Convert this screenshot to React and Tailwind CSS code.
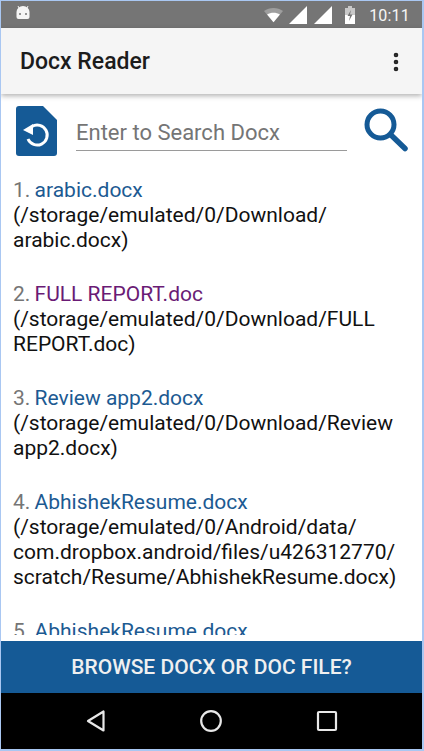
import { MoreVertical } from 'lucide-react';

const files = [
    { n: 1, name: 'arabic.docx', path: ['(/storage/emulated/0/Download/', 'arabic.docx)'], color: 'text-[#1c5a92]' },
    { n: 2, name: 'FULL REPORT.doc', path: ['(/storage/emulated/0/Download/FULL', 'REPORT.doc)'], color: 'text-[#6a1b75]' },
    { n: 3, name: 'Review app2.docx', path: ['(/storage/emulated/0/Download/Review', 'app2.docx)'], color: 'text-[#1c5a92]' },
    {
        n: 4,
        name: 'AbhishekResume.docx',
        path: ['(/storage/emulated/0/Android/data/', 'com.dropbox.android/files/u426312770/', 'scratch/Resume/AbhishekResume.docx)'],
        color: 'text-[#1c5a92]',
    },
    { n: 5, name: 'AbhishekResume.docx', path: [], color: 'text-[#1c5a92]' },
];

function StatusBar() {
    return (
        <div className="h-[27px] shrink-0 bg-[#757575] flex items-center pl-[14px] pr-[12px] text-white">
            <svg width="16" height="15" viewBox="0 0 16 15" className="mb-[2px]">
                <path d="M1.5 6a6.5 6 0 0 1 13 0v5a2 2 0 0 1-2 2h-9a2 2 0 0 1-2-2z" fill="#f5f5f5" />
                <path d="M4 2 3 0M12 2l1-2" stroke="#f5f5f5" strokeWidth="1" />
                <circle cx="5" cy="8" r="1" fill="#757575" />
                <circle cx="11" cy="8" r="1" fill="#757575" />
            </svg>
            <div className="ml-auto flex items-center">
                <svg width="19" height="16" viewBox="0 0 21 16">
                    <path d="M0 3.5C6 -1 15 -1 21 3.5L10.5 16z" fill="#9e9e9e" />
                    <path d="M3.4 7.5C7.5 4.7 13.5 4.7 17.6 7.5L10.5 16z" fill="#fff" />
                </svg>
                <svg width="18" height="18" viewBox="0 0 18 18" className="ml-[6px]">
                    <path d="M0 18 18 0v18z" fill="#fff" />
                </svg>
                <svg width="18" height="18" viewBox="0 0 18 18" className="ml-[7px]">
                    <path d="M0 18 18 0v18z" fill="#fff" />
                </svg>
                <svg width="12" height="18" viewBox="0 0 12 18" className="ml-[12px]">
                    <path d="M4 0h4v2h3v16H1V2h3z" fill="#c8c8c8" />
                    <path d="M1 9h10v9H1z" fill="#fff" />
                    <path d="M7 4 3.5 10H6l-1 5 3.5-6.500H6z" fill="#757575" />
                </svg>
                <span className="ml-[13px] pt-[2px] text-[16px] leading-none tracking-[0.2px] text-[#f5f5f5]">10:11</span>
            </div>
        </div>
    );
}

function NavBar() {
    return (
        <div className="h-[56px] shrink-0 bg-black grid grid-cols-3 items-center pl-[37px] pr-[37px]">
            <svg width="22" height="24" viewBox="0 0 22 24" className="justify-self-center">
                <path d="M18.500 2.500v19L3 12z" fill="none" stroke="#e8e8e8" strokeWidth="2.200" strokeLinejoin="round" />
            </svg>
            <svg width="24" height="24" viewBox="0 0 24 24" className="justify-self-center">
                <circle cx="12" cy="12" r="9.800" fill="none" stroke="#e8e8e8" strokeWidth="2.200" />
            </svg>
            <svg width="22" height="22" viewBox="0 0 22 22" className="justify-self-center">
                <rect x="2" y="2" width="18" height="18" rx="1" fill="none" stroke="#e8e8e8" strokeWidth="2.200" />
            </svg>
        </div>
    );
}

export default function App() {
    return (
        <div className="w-[424px] h-[751px] bg-[#a9c7f2] pt-[1px] pb-[2px] pl-[1px] pr-[2px] font-['Roboto',sans-serif]">
            <div className="h-full flex flex-col bg-white overflow-hidden">
                <StatusBar />

                <div className="relative z-10 h-[66px] shrink-0 bg-[#f5f5f5] flex items-center justify-between pl-[19px] pr-[14px] pt-[2px] shadow-[0_2px_5px_rgba(0,0,0,0.3)]">
                    <h1 className="mt-[1px] text-[23px] font-medium text-[#1c1c1c]">Docx Reader</h1>
                    <MoreVertical size={24} strokeWidth={2.6} className="text-[#222]" />
                </div>

                <div className="flex-1 min-h-0 mb-[6px] overflow-hidden">
                    <div className="flex items-start pl-[15px] pr-[12px] pt-[12px]">
                        <svg width="41" height="50" viewBox="0 0 41 50" className="shrink-0">
                            <path d="M3 0h24l14 14v33a3 3 0 0 1-3 3H3a3 3 0 0 1-3-3V3a3 3 0 0 1 3-3z" fill="#155a96" />
                            <path d="M16 20.500A10 10 0 1 1 12 33" fill="none" stroke="#fff" strokeWidth="3" />
                            <path d="M7 24 17 18v11z" fill="#fff" />
                        </svg>
                        <div className="ml-[19px] mt-[12px] w-[271px] h-[33px] border-b border-[#9a9a9a] text-[22px] leading-[29px] text-[#757575]">
                            Enter to Search Docx
                        </div>
                        <svg width="46" height="46" viewBox="0 0 46 46" className="ml-[16px] mt-[1px] shrink-0">
                            <circle cx="17.500" cy="17.500" r="13.500" fill="none" stroke="#155a96" strokeWidth="5" />
                            <path d="M28 28 42 41.500" stroke="#155a96" strokeWidth="5.500" strokeLinecap="round" />
                        </svg>
                    </div>

                    <div className="pl-[12px] pt-[22px] text-[21px] leading-[25px] text-[#111]">
                        {files.map((f) => (
                            <div key={f.n} className="mb-[29px]">
                                <div>
                                    <span className="text-[#757575]">{f.n}. </span>
                                    <span className={`-ml-px ${f.color}`}>{f.name}</span>
                                </div>
                                {f.path.map((line) => (
                                    <div key={line}>{line}</div>
                                ))}
                            </div>
                        ))}
                    </div>
                </div>

                <div className="h-[52px] shrink-0 bg-[#155a96] flex items-center justify-center pt-[2px] text-[21px] font-medium text-[#f0f0f0]">
                    BROWSE DOCX OR DOC FILE?
                </div>
                <NavBar />
            </div>
        </div>
    );
}
